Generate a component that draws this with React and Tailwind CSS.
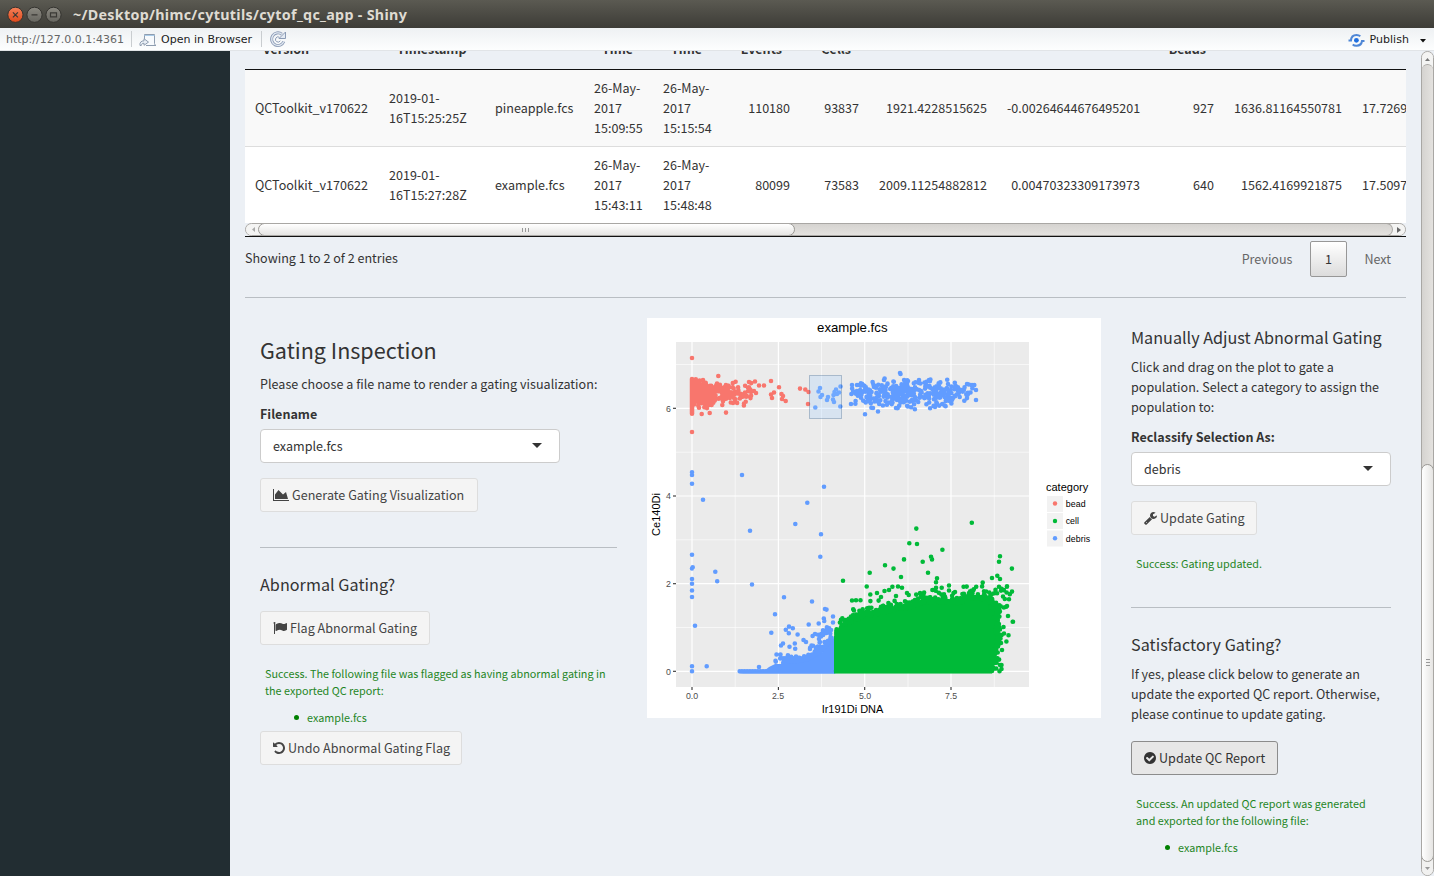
import React from "react";

/* ---------- scatter plot data ---------- */

function makeRandom(seed) {
  let s = seed;
  return () => {
    s = (s * 1664525 + 1013904223) % 4294967296;
    return s / 4294967296;
  };
}

const dots = (points) =>
  points.map(([x, y]) => `M${x.toFixed(1)} ${y.toFixed(1)}h0.01`).join("");

function interpolate(line, x) {
  for (let i = 1; i < line.length; i++) {
    if (x <= line[i][0]) {
      const [x0, y0] = line[i - 1];
      const [x1, y1] = line[i];
      return y0 + ((y1 - y0) * (x - x0)) / (x1 - x0);
    }
  }
  return line[line.length - 1][1];
}

function gauss(r) {
  return r() + r() + r() + r() - 2;
}

const beadPoints = (() => {
  const r = makeRandom(11);
  const pts = [];
  for (let i = 0; i < 150; i++) pts.push([45, 61 + (i / 150) * 35]);
  for (let i = 0; i < 320; i++) {
    const x = 45.5 - Math.log(1 - r() * 0.94) * 21;
    const y = 75 + gauss(r) * (x < 75 ? 11.5 : 9);
    if (y > 61) pts.push([x, y]);
  }
  return pts.concat([
    [45, 40], [45, 114], [71.3, 58], [54.7, 96], [79, 94.6], [102, 64], [108, 63.5],
    [112, 67.5], [117, 67.5], [124, 63], [124, 76.5], [127, 74.5], [125, 80], [132, 69.3],
    [134.5, 76], [136, 78], [135, 81], [138.7, 83], [153, 70.6], [158.3, 71.5], [161.6, 74],
    [161, 86], [97, 85.5], [86, 85], [104, 74], [107, 73], [109, 75], [103, 79],
  ]);
})();

const debrisTop = (() => {
  const r = makeRandom(29);
  const pts = [];
  for (let i = 0; i < 270; i++) {
    const x = 207 + r() * 103 + gauss(r) * 4;
    const y = 75 + gauss(r) * 12;
    if (y > 60 && y < 92) pts.push([x, y]);
  }
  for (let i = 0; i < 48; i++) pts.push([242 + r() * 28, 75 + gauss(r) * 9]);
  for (let i = 0; i < 24; i++) pts.push([308 + r() * 22, 74 + gauss(r) * 8]);
  return pts.concat([
    [205, 67], [210, 67], [204, 86], [218, 96.3], [226, 90], [231, 93.5], [253, 55],
    [253.5, 56], [237, 62], [261, 63], [272, 62], [282, 62], [301, 66], [320, 66], [325, 67],
    [329, 72], [329, 82], [249, 90], [288, 89],
    [173, 70], [171.5, 73.5], [175, 77], [173.5, 79], [168.3, 89.5], [181, 79], [180, 82],
    [186, 81.5], [187, 84], [186.5, 77], [189, 71.5], [187.5, 74], [192, 74.5], [193.5, 68.5],
    [193.3, 88.5], [190, 76],
  ]);
})();

const debrisEdge = [
  [91, 353], [117, 353], [122, 348], [128, 343], [140, 344], [152, 343], [162, 341],
  [172, 335], [180, 328], [188, 318],
];

const debrisLow = (() => {
  const r = makeRandom(5);
  const pts = [];
  for (let i = 0; i < 60; i++) pts.push([92.7 + i * 1.6, 353.3]);
  for (let i = 0; i < 130; i++) {
    const x = 121 + Math.sqrt(r()) * 64;
    pts.push([x, Math.min(353, interpolate(debrisEdge, x) + 2 - Math.abs(gauss(r)) * 7)]);
  }
  for (let i = 0; i < 26; i++) {
    const x = 160 + Math.sqrt(r()) * 26;
    pts.push([x, interpolate(debrisEdge, x) - r() * 22]);
  }
  return pts.concat([
    [45, 154.3], [45, 157], [45, 165.7], [56, 181.7], [95, 157], [160.3, 184.7],
    [177, 168.7], [103, 212.8], [148.3, 206], [174, 216.2], [173.3, 238.7], [45, 236.7],
    [45.7, 249.3], [45, 250.5], [45, 261], [45, 265.7], [45, 272.5], [45, 279], [68.3, 253.7],
    [70.2, 263.3], [105, 266.5], [137, 279.3], [165, 283.5], [178, 291], [179.5, 291.6],
    [128, 296.3], [124.3, 314.7], [48, 307.8], [45, 348.3], [59.7, 348.3], [45, 353.3],
    [112, 349], [186, 298.5], [176.8, 300.5], [177.2, 303], [186, 304.5], [161.7, 306.5],
    [171.7, 305.5], [142, 308.6], [145.8, 310.2], [138.8, 311.8], [141.8, 315.3],
    [150.6, 316.5], [165.6, 318], [168, 316], [174, 317], [172, 321], [156.5, 322],
    [159, 324], [136, 325.5], [134, 327.5], [142.5, 328.8], [147.8, 325.5], [148.2, 330.8],
    [163, 331], [129.5, 336.5], [133.5, 336.5], [180, 310], [179.5, 315], [184, 312],
  ]);
})();

const cellEdge = [
  [188, 318], [193, 306], [206, 299], [223, 294], [240, 290], [256, 288], [273, 282],
  [290, 280], [313, 282], [323, 277], [338, 277], [346, 281], [350, 290], [353, 302],
];

const cellPoints = (() => {
  const r = makeRandom(77);
  const pts = [];
  for (let i = 0; i < 240; i++) {
    const x = 189 + r() * 158;
    pts.push([x, interpolate(cellEdge, x) + 4 - Math.abs(gauss(r)) * 9]);
  }
  for (let i = 0; i < 80; i++) {
    const y = 288 + r() * 65;
    pts.push([(y < 330 ? 350.5 : 347.5) + gauss(r) * 3, y]);
  }
  for (let i = 0; i < 20; i++) pts.push([341 + r() * 22, 268 + r() * 22]);
  for (let i = 0; i < 79; i++) pts.push([189 + i * 2, 353]);
  for (let i = 0; i < 30; i++) pts.push([189.3, 313 + i * 1.35]);
  return pts.concat([
    [196, 262.8], [222.7, 254.8], [238, 247.2], [246.5, 250.6], [257, 241.4], [262.3, 225.3],
    [270, 226], [269.3, 210.6], [295.4, 231.8], [284, 238.7], [285, 241.4], [275.7, 243.8],
    [281, 254.8], [254, 259], [324.8, 204.8], [353, 238.3], [352, 243.8], [364.9, 250.6],
    [350.3, 257.8], [353, 261], [345, 260], [290, 260.3], [289, 264.3], [335.7, 264.5],
    [219.7, 268.5], [245.4, 268.7], [251, 268.5], [255, 269.8], [289, 269.8], [294.7, 269.8],
    [302, 267.5], [316.6, 268.7], [302, 272.5], [308, 274], [242, 272], [237.5, 273],
    [223.3, 276.5], [205, 282.5], [209, 282.3], [213.5, 282.3], [234, 279], [352, 268.8],
    [360, 268.2], [365, 273.6], [362, 281.3], [360, 288], [361, 298], [365.7, 303.7],
    [366, 303.7], [356.5, 309], [357, 315.5], [361.5, 317.3], [359.4, 323.5], [353, 347],
    [354.5, 347], [354.5, 351], [352.5, 353.3], [230, 275], [249, 278], [260, 275],
    [355, 332], [354, 325],
  ]);
})();

const majorX = [45, 131.4, 217.7, 304];
const minorX = [88.2, 174.5, 261, 347.3];
const majorY = [353.3, 265.7, 178, 90.3];
const minorY = [309.5, 221.8, 134.2, 46.5];

function Plot() {
  return (
    <svg width="454" height="400" viewBox="0 0 454 400" className="block bg-white" style={{ fontFamily: '"Liberation Sans", sans-serif' }}>
      <rect x="29" y="24" width="353" height="345" fill="#ebebeb" />
      <g stroke="#fff" strokeWidth="0.6">
        {minorX.map((x) => <path key={x} d={`M${x} 24V369`} />)}
        {minorY.map((y) => <path key={y} d={`M29 ${y}H382`} />)}
      </g>
      <g stroke="#fff" strokeWidth="1.2">
        {majorX.map((x) => <path key={x} d={`M${x} 24V369`} />)}
        {majorY.map((y) => <path key={y} d={`M29 ${y}H382`} />)}
      </g>
      <g stroke="#333" strokeWidth="1.1">
        {majorX.map((x) => <path key={x} d={`M${x} 369v3`} />)}
        {majorY.map((y) => <path key={y} d={`M26 ${y}h3`} />)}
      </g>
      <g strokeWidth="4.6" strokeLinecap="round" fill="none">
        <path stroke="#f8766d" d={dots(beadPoints)} />
        <path stroke="#619cff" d={dots(debrisTop)} />
        <path stroke="#619cff" d={dots(debrisLow)} />
      </g>
      <path fill="#619cff" d="M91 355.6L117 353L122 349L128 346L140 346L152 345L162 343L172 337L180 330L188 320V355.6Z" />
      <path fill="#00ba38" d={`M187 355.6V318L${cellEdge.map((p) => p.join(" ")).join("L")}L351 330L345 355.6Z`} />
      <path stroke="#00ba38" strokeWidth="4.6" strokeLinecap="round" fill="none" d={dots(cellPoints)} />
      <rect x="162.5" y="57.5" width="32" height="43" fill="#9cccff" fillOpacity="0.25" stroke="#003366" strokeOpacity="0.25" />

      <text x="205.3" y="14" textAnchor="middle" fontSize="13.2">example.fcs</text>
      <g fontSize="8.8" fill="#4d4d4d" textAnchor="middle">
        <text x="45" y="381">0.0</text>
        <text x="131" y="381">2.5</text>
        <text x="218" y="381">5.0</text>
        <text x="304" y="381">7.5</text>
      </g>
      <g fontSize="8.8" fill="#4d4d4d" textAnchor="end">
        <text x="24" y="356.5">0</text>
        <text x="24" y="269">2</text>
        <text x="24" y="181.2">4</text>
        <text x="24" y="93.5">6</text>
      </g>
      <text x="205.5" y="395" textAnchor="middle" fontSize="11">Ir191Di DNA</text>
      <text transform="translate(13 196.5) rotate(-90)" textAnchor="middle" fontSize="11">Ce140Di</text>
      <text x="399" y="173" fontSize="11">category</text>
      <g fill="#f2f2f2">
        <rect x="400" y="178" width="16" height="16" />
        <rect x="400" y="195" width="16" height="16" />
        <rect x="400" y="212.5" width="16" height="16" />
      </g>
      <circle cx="408" cy="185.5" r="2.2" fill="#f8766d" />
      <circle cx="408" cy="203" r="2.2" fill="#00ba38" />
      <circle cx="408" cy="220.3" r="2.2" fill="#619cff" />
      <g fontSize="8.8">
        <text x="418.7" y="189" textLength="20">bead</text>
        <text x="418.7" y="206.3">cell</text>
        <text x="418.7" y="223.8" textLength="24.5">debris</text>
      </g>
    </svg>
  );
}

/* ---------- icons ---------- */

function Glyph({ box, className, d }) {
  return (
    <svg viewBox={box} className={className} fill="currentColor">
      <path d={d} />
    </svg>
  );
}

const AreaChartIcon = () => (
  <Glyph box="0 0 2048 1792" className="h-[14px] w-4" d="M2048 1536v128h-2048v-1536h128v1408h1920zm-384-1024l256 896h-1664v-576l448-576 576 576z" />
);
const FlagIcon = () => (
  <Glyph box="0 0 1792 1792" className="h-[14px] w-[14px]" d="M320 256q0 72-64 110v1266q0 13-9.5 22.5t-22.5 9.5h-64q-13 0-22.5-9.5t-9.5-22.5v-1266q-64-38-64-110 0-53 37.5-90.5t90.5-37.5 90.5 37.5 37.5 90.5zm1472 64v763q0 25-12.5 38.5t-39.5 27.5q-215 116-369 116-61 0-123.5-22t-108.5-48-115.5-48-142.5-22q-192 0-464 146-17 9-33 9-26 0-45-19t-19-45v-742q0-32 31-55 21-14 79-43 236-120 421-120 107 0 200 29t219 88q38 19 88 19 54 0 117.5-21t110-47 88-47 54.5-21q26 0 45 19t19 45z" />
);
const UndoIcon = () => (
  <Glyph box="128 0 1536 1792" className="h-[14px] w-3" d="M1664 896q0 156-61 298t-164 245-245 164-298 61q-172 0-327-72.5t-264-204.5q-7-10-6.5-22.5t8.5-20.5l137-138q10-9 25-9 16 2 23 12 73 95 179 147t225 52q104 0 198.5-40.5t163.5-109.5 109.5-163.5 40.5-198.5-40.5-198.5-109.5-163.5-163.5-109.5-198.5-40.5q-98 0-188 35.5t-160 101.5l137 138q31 30 14 69-17 40-59 40h-448q-26 0-45-19t-19-45v-448q0-42 40-59 39-17 69 14l130 129q107-101 244.5-156.5t284.5-55.5q156 0 298 61t245 164 164 245 61 298z" />
);
const WrenchIcon = () => (
  <Glyph box="64 0 1664 1792" className="h-[14px] w-[13px]" d="M448 1472q0-26-19-45t-45-19-45 19-19 45 19 45 45 19 45-19 19-45zm644-420l-682 682q-37 37-90 37-52 0-91-37l-106-108q-38-36-38-90 0-53 38-91l681-681q39 98 114.5 173.5t173.5 114.5zm634-435q0 39-23 106-47 134-164.5 217.5t-258.5 83.5q-185 0-316.5-131.5t-131.5-316.5 131.5-316.5 316.5-131.5q58 0 121.5 16.5t107.5 46.5q16 11 16 28t-16 28l-293 169v224l193 107q5-3 79-48.5t135.5-81 70.5-35.5q15 0 23.5 10t8.5 25z" />
);
const CheckIcon = () => (
  <Glyph box="128 0 1536 1792" className="h-[14px] w-3" d="M1412 734q0-28-18-46l-91-90q-19-19-45-19t-45 19l-408 407-226-226q-19-19-45-19t-45 19l-91 90q-18 18-18 46 0 27 18 45l362 362q19 19 45 19 27 0 46-19l543-543q18-18 18-45zm252 162q0 209-103 385.5t-279.5 279.5-385.5 103-385.5-103-279.5-279.5-103-385.5 103-385.5 279.5-279.5 385.5-103 385.5 103 279.5 279.5 103 385.5z" />
);

/* ---------- window chrome ---------- */

function TitleBar() {
  return (
    <header className="flex h-7 shrink-0 items-center bg-gradient-to-b from-[#5b5a52] to-[#3d3c37] pl-[6px]">
      <svg width="60" height="20" viewBox="0 0 60 20" className="mt-px">
        <defs>
          <linearGradient id="closeFill" x2="0" y2="1">
            <stop offset="0" stopColor="#f58159" />
            <stop offset="1" stopColor="#e0491b" />
          </linearGradient>
          <linearGradient id="grayFill" x2="0" y2="1">
            <stop offset="0" stopColor="#8b8981" />
            <stop offset="1" stopColor="#66655f" />
          </linearGradient>
        </defs>
        <circle cx="9.4" cy="9.8" r="7.6" fill="url(#closeFill)" stroke="#34332f" />
        <circle cx="28.5" cy="9.8" r="7.6" fill="url(#grayFill)" stroke="#34332f" />
        <circle cx="47.5" cy="9.8" r="7.6" fill="url(#grayFill)" stroke="#34332f" />
        <g stroke="#3a3935" strokeWidth="1.2" fill="none">
          <path d="M6.9 7.3l5 5M11.9 7.3l-5 5M25.5 9.8h6M44.5 7.8h6v4h-6z" />
        </g>
      </svg>
      <h1 className="ml-[7px] whitespace-nowrap pt-[2px] font-['Noto_Sans',sans-serif] text-[14.3px] font-bold leading-5 tracking-[0.3px] text-[#dfdbd2]">
        ~/Desktop/himc/cytutils/cytof_qc_app - Shiny
      </h1>
    </header>
  );
}

function Toolbar() {
  return (
    <div className="flex h-[23px] shrink-0 items-center border-b border-[#e1e4e7] bg-gradient-to-b from-[#eef1f3] to-[#fdfefe] font-['DejaVu_Sans',sans-serif] text-[11px] text-[#222]">
      <span className="ml-[6px] w-[125px] whitespace-nowrap pt-[2px] text-[#666]">http://127.0.0.1:4361</span>
      <span className="h-4 w-px bg-[#c9cdd0]" />
      <svg width="18" height="14" viewBox="0 0 18 14" className="ml-[7px] mt-[2px]" fill="none" stroke="#8e9db0">
        <path d="M5.5 6V1.5h10V10.5q0 1.5 1.5 2H7" fill="#f7fafd" />
        <path d="M5.5 2.5h10" stroke="#a9cbe8" />
        <path d="M1 12.5c-.6-3 1.2-4.7 4-4.7V5.7l4.5 3.4L5 12.3v-2c-1.7 0-2.5.7-2.7 2.2z" fill="#e8eef5" />
      </svg>
      <span className="ml-[4px] whitespace-nowrap pt-[2px]">Open in Browser</span>
      <span className="ml-[9px] h-4 w-px bg-[#c9cdd0]" />
      <svg width="17" height="16" viewBox="0 0 17 16" className="-mt-px ml-[8px]" fill="none">
        <path d="M13.8 10.5a6.3 6.3 0 1 1-2-7.3" stroke="#8b9bb5" strokeWidth="3" />
        <path d="M15.5 1v6.5H9z" fill="#e3eaf3" stroke="#8b9bb5" />
        <path d="M13.8 10.5a6.3 6.3 0 1 1-2-7.3" stroke="#e3eaf3" strokeWidth="1.3" />
        <path d="M10.3 9.8a2.6 2.6 0 1 1-1-3.6" stroke="#8b9bb5" />
      </svg>
      <div className="ml-auto flex items-center pr-2">
        <svg width="17" height="14" viewBox="0 0 17 14" className="mr-px mt-px" fill="none" stroke="#4f87d6" strokeWidth="2">
          <circle cx="8.4" cy="7.3" r="2.4" fill="#1f6fe0" stroke="none" />
          <path d="M0.5 7.5h2.5C3.2 4 5.5 2 8.5 2c1.5 0 2.8.4 3.8 1.3" />
          <path d="M16.500 8H14c-.4 3-2.600 4.700-5.500 4.700-1.500 0-2.800-.4-3.800-1.300" />
        </svg>
        <span className="ml-[3px] pt-[2px] tracking-[0.05px]">Publish</span>
        <svg width="6" height="4" viewBox="0 0 6 4" className="ml-[11px] mt-[3px]"><path d="M0 0h6L3 3.5z" fill="#111" /></svg>
      </div>
    </div>
  );
}

function VerticalScrollbar() {
  return (
    <div className="flex w-[13px] shrink-0 flex-col overflow-hidden rounded-[7px] border border-[#a9a7a4] bg-gradient-to-r from-[#d5d3d0] to-[#e4e2df]">
      <div className="flex h-[18px] shrink-0 items-center justify-center bg-[#f4f4f3] pb-[3px]">
        <svg width="5" height="3" viewBox="0 0 5 3"><path d="M0 3h5L2.5 0z" fill="#777" /></svg>
      </div>
      <div className="-mt-[6px] h-[407px] shrink-0 rounded-t-[6px] border-t border-[#a9a7a4] bg-gradient-to-r from-[#d5d3d0] to-[#e4e2df]" />
      <div className="relative z-10 -mx-px -mt-[7px] flex h-[398px] shrink-0 items-center justify-center rounded-[7px] border border-[#9a9894] bg-gradient-to-r from-white to-[#e6e5e3]">
        <div className="-mt-[2px] flex flex-col gap-[2px]">
          <i className="h-px w-[4px] bg-[#999]" />
          <i className="h-px w-[4px] bg-[#999]" />
          <i className="h-px w-[4px] bg-[#999]" />
        </div>
      </div>
      <div className="-mt-[8px] flex grow items-end justify-center bg-[#f1f1f0] pb-[5px]">
        <svg width="5" height="3" viewBox="0 0 5 3"><path d="M0 0h5L2.5 3z" fill="#999" /></svg>
      </div>
    </div>
  );
}

function HorizontalScrollbar() {
  return (
    <div className="flex h-[13px] items-stretch overflow-hidden rounded-[7px] border border-[#a9a7a4] bg-gradient-to-b from-[#d5d3d0] to-[#e4e2df]">
      <div className="flex w-[18px] shrink-0 items-center bg-[#f4f4f3] pl-[6px]">
        <svg width="3" height="5" viewBox="0 0 3 5"><path d="M3 0v5L0 2.5z" fill="#aaa" /></svg>
      </div>
      <div className="relative z-10 -my-px -ml-[6px] flex w-[537px] shrink-0 items-center justify-center gap-[2px] rounded-[7px] border border-[#9a9894] bg-gradient-to-b from-white to-[#e6e5e3] pr-[2px]">
        <i className="h-[4px] w-px bg-[#999]" />
        <i className="h-[4px] w-px bg-[#999]" />
        <i className="h-[4px] w-px bg-[#999]" />
      </div>
      <div className="-my-px flex grow bg-[#f4f4f3]">
        <div className="-ml-[7px] grow rounded-r-[7px] border border-l-0 border-[#a9a7a4] bg-gradient-to-b from-[#d5d3d0] to-[#e4e2df]" />
        <div className="flex w-[12px] items-center justify-center">
          <svg width="4" height="6" viewBox="0 0 4 6"><path d="M0 0v6L4 3z" fill="#666" /></svg>
        </div>
      </div>
    </div>
  );
}

/* ---------- table ---------- */

const COLUMNS = "grid w-[1181px] grid-cols-[134px_106px_99px_69px_69px_78px_69px_128px_153px_74px_128px_74px]";
const headers = ["Version", "Timestamp", "", "Time", "Time", "Events", "Cells", "", "", "Beads", "", ""];
const rows = [
  ["QCToolkit_v170622", "2019-01-\n16T15:25:25Z", "pineapple.fcs", "26-May-\n2017\n15:09:55", "26-May-\n2017\n15:15:54", "110180", "93837", "1921.4228515625", "-0.00264644676495201", "927", "1636.81164550781", "17.7269"],
  ["QCToolkit_v170622", "2019-01-\n16T15:27:28Z", "example.fcs", "26-May-\n2017\n15:43:11", "26-May-\n2017\n15:48:48", "80099", "73583", "2009.11254882812", "0.00470323309173973", "640", "1562.4169921875", "17.5097"],
];

function DataTable() {
  return (
    <div className="overflow-hidden border-b border-[#111]">
      <div className={`${COLUMNS} h-[19px] content-end overflow-hidden border-b border-[#111]`}>
        {headers.map((h, i) => (
          <div key={i} className={i > 4 ? "px-[18px] pb-[10px] text-right font-bold leading-5" : "px-[18px] pb-[10px] font-bold leading-5"}>
            {h}
          </div>
        ))}
      </div>
      {rows.map((row, r) => (
        <div key={r} className={`${COLUMNS} items-center py-2 ${r === 0 ? "bg-[#f9f9f9]" : "border-t border-[#ddd] bg-white"}`}>
          {row.map((cell, i) => (
            <div key={i} className={i > 4 && i < 11 ? "whitespace-pre px-[10px] text-right" : "whitespace-pre px-[10px]"}>
              {cell}
            </div>
          ))}
        </div>
      ))}
      <HorizontalScrollbar />
    </div>
  );
}

/* ---------- form pieces ---------- */

function Button({ icon, active, className = "", children }) {
  const tone = active ? "border-[#8c8c8c] bg-[#e7e7e7] text-[#333]" : "border-[#ddd] bg-[#f4f4f4] text-[#444]";
  return (
    <button className={`flex h-[34px] items-center gap-[3px] whitespace-nowrap rounded-[3px] border pl-3 tracking-[0.03px] ${tone} ${className}`}>
      {icon}
      <span>{children}</span>
    </button>
  );
}

function Select({ value, className }) {
  return (
    <div className={`flex h-[34px] items-center justify-between rounded-[4px] border border-[#ccc] bg-white pl-3 pr-[17px] ${className}`}>
      <span>{value}</span>
      <svg width="10" height="5" viewBox="0 0 10 5" className="-mt-[2px]"><path d="M0 0h10L5 5z" fill="#333" /></svg>
    </div>
  );
}

function FileItem({ children }) {
  return (
    <li className="flex items-center gap-[8px] pl-[33px]">
      <i className="h-[5px] w-[5px] rounded-full bg-[#008000]" />
      {children}
    </li>
  );
}

const NOTE = "pl-[5px] text-[10.8px] leading-[17px] text-[#1f861f]";

function GatingInspection() {
  return (
    <section className="w-[357px] pt-[19px]">
      <h3 className="text-[21.55px] leading-[26px]">Gating Inspection</h3>
      <p className="mt-[11px] tracking-[0.03px]">Please choose a file name to render a gating visualization:</p>
      <label className="mt-[10px] block font-bold">Filename</label>
      <Select value="example.fcs" className="mt-[5px] w-[300px]" />
      <Button icon={<AreaChartIcon />} className="mt-[15px] w-[218px]">Generate Gating Visualization</Button>
      <hr className="mt-[35px] border-t border-[#b9bec3]" />
      <h4 className="mt-[26px] text-[16.15px] leading-5 tracking-[0.05px]">Abnormal Gating?</h4>
      <Button icon={<FlagIcon />} className="mt-[17px] w-[170px]">Flag Abnormal Gating</Button>
      <div className={`mt-[20px] ${NOTE}`}>
        <p className="whitespace-nowrap">
          Success. The following file was flagged as having abnormal gating in<br />the exported QC report:
        </p>
        <ul className="-ml-[4px] mt-[10px]">
          <FileItem>example.fcs</FileItem>
        </ul>
      </div>
      <Button icon={<UndoIcon />} className="mt-[5px] w-[202px]">Undo Abnormal Gating Flag</Button>
    </section>
  );
}

function ManualAdjust() {
  return (
    <section className="w-[260px] pt-[9px]">
      <h4 className="whitespace-nowrap text-[16.17px] leading-5">Manually Adjust Abnormal Gating</h4>
      <p className="mt-[10px] whitespace-nowrap tracking-[0.02px]">
        Click and drag on the plot to gate a<br />population. Select a category to assign the<br />population to:
      </p>
      <label className="mt-[10px] block font-bold">Reclassify Selection As:</label>
      <Select value="debris" className="mt-[5px] w-[260px]" />
      <Button icon={<WrenchIcon />} className="mt-[15px] w-[126px]">Update Gating</Button>
      <p className={`mt-[20px] ${NOTE}`}>Success: Gating updated.</p>
      <hr className="mt-[35px] border-t border-[#b9bec3]" />
      <h4 className="mt-[26px] text-[16.17px] leading-5 tracking-[0.05px]">Satisfactory Gating?</h4>
      <p className="mt-[10px] whitespace-nowrap">
        If yes, please click below to generate an<br />update the exported QC report. Otherwise,<br />please continue to update gating.
      </p>
      <Button active icon={<CheckIcon />} className="mt-[17px] w-[147px]">Update QC Report</Button>
      <div className={`mt-[20px] ${NOTE}`}>
        <p className="whitespace-nowrap">
          Success. An updated QC report was generated<br />and exported for the following file:
        </p>
        <ul className="-ml-[4px] mt-[10px]">
          <FileItem>example.fcs</FileItem>
        </ul>
      </div>
    </section>
  );
}

export default function App() {
  return (
    <div className="flex h-[876px] w-[1434px] flex-col overflow-hidden bg-[#ecf0f5]">
      <TitleBar />
      <Toolbar />
      <div className="flex min-h-0 grow">
        <aside className="w-[230px] shrink-0 bg-[#222d32]" />
        <main className="min-w-0 grow overflow-hidden px-[15px] font-['Noto_Sans_CJK_JP','Noto_Sans_CJK_SC',sans-serif] text-[12.56px] leading-5 text-[#333]">
          <DataTable />
          <div className="flex h-[60px] justify-between pt-1">
            <span className="pt-[7px]">Showing 1 to 2 of 2 entries</span>
            <div className="flex h-9 items-center text-[#666]">
              <span className="pr-[18px]">Previous</span>
              <span className="flex h-9 w-[37px] items-center justify-center rounded-[2px] border border-[#979797] bg-gradient-to-b from-white to-[#dcdcdc] pr-px text-[#333]">1</span>
              <span className="pl-[17px] pr-[15px]">Next</span>
            </div>
          </div>
          <hr className="border-t border-[#b9bec3]" />
          <div className="flex items-start pl-[15px] pt-5">
            <GatingInspection />
            <div className="ml-[30px] w-[454px] shrink-0"><Plot /></div>
            <div className="ml-[30px]"><ManualAdjust /></div>
          </div>
        </main>
        <VerticalScrollbar />
      </div>
    </div>
  );
}
